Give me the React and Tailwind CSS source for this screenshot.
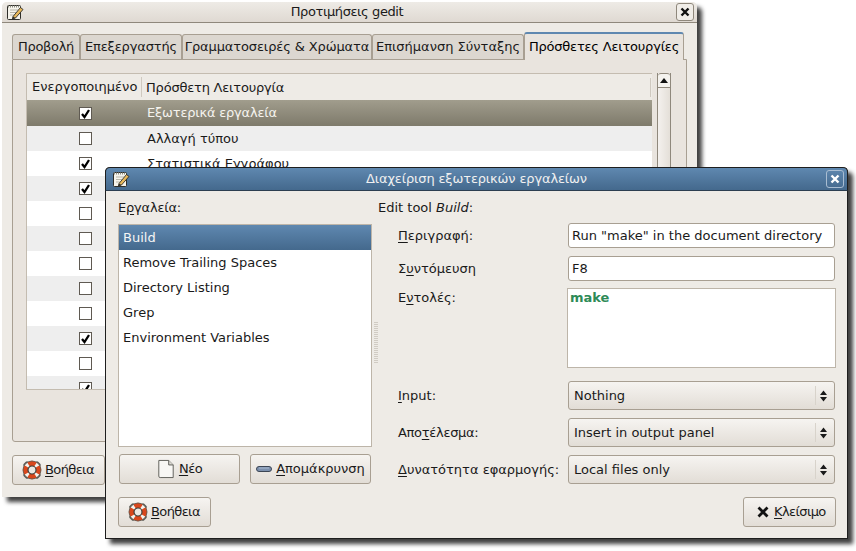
const FONT = "font-['DejaVu_Sans',sans-serif]";

const NoteIcon = ({ className }) => (
  <svg className={className} viewBox="0 0 18 18" width="18" height="18">
    <rect x="1.500" y="2.500" width="13" height="14" rx="1" fill="#f6f4ec" stroke="#2e2e2a" />
    <path d="M2 3.500h12" stroke="#8a8a80" strokeWidth="2" strokeDasharray="1 1" />
    <path d="M4 7h8M4 9.500h6M4 12h4" stroke="#b8b5a8" />
    <path d="M7 13.500 L14.500 4.500 L17 6.500 L9.500 15 L6.500 16 Z" fill="#e8b85a" stroke="#2e2e2a" strokeWidth="0.9" />
    <path d="M6.500 16 L7 13.500 L9.500 15 Z" fill="#2e2e2a" />
  </svg>
);

const HelpIcon = () => (
  <svg viewBox="0 0 20 20" width="20" height="20" className="shrink-0">
    <path d="M3 5 5 3M15 3l2 2M17 15l-2 2M5 17l-2-2" stroke="#5a5a54" strokeWidth="3.500" strokeLinecap="round" />
    <circle cx="10" cy="10" r="6.500" fill="none" stroke="#f5f2ec" strokeWidth="5" />
    <path d="M6.500 4.500a6.500 6.500 0 0 1 7 0M6.500 15.500a6.500 6.500 0 0 0 7 0M4.500 6.500a6.500 6.500 0 0 0 0 7M15.500 6.500a6.500 6.500 0 0 1 0 7" fill="none" stroke="#d8471c" strokeWidth="5" />
    <circle cx="10" cy="10" r="9" fill="none" stroke="#5a5a54" strokeWidth="0.800" />
    <circle cx="10" cy="10" r="4" fill="#ece8e2" stroke="#3c3c38" strokeWidth="1.200" />
  </svg>
);

const NewIcon = () => (
  <svg viewBox="0 0 20 22" width="18" height="20" className="shrink-0">
    <path d="M2 1.500h11l5 5v14H3.500a1.500 1.500 0 0 1-1.500-1.500Z" fill="#f8f7f4" stroke="#55554f" />
    <path d="M13 1.500v5h5" fill="#dcdad4" stroke="#55554f" />
  </svg>
);

const MinusIcon = () => (
  <svg viewBox="0 0 16 6" width="16" height="6" className="shrink-0">
    <rect x="0.500" y="0.500" width="15" height="5" rx="2.500" fill="#7c90ad" stroke="#3d4654" />
    <path d="M3 2h10" stroke="#a9b9cf" />
  </svg>
);

const Key = ({ children }) => <u className="underline-offset-2">{children}</u>;

function Button({ className, children }) {
  return (
    <div className={`flex items-center gap-1 rounded-[3px] border border-[#a89f92] bg-gradient-to-b from-[#f6f4f1] to-[#e2ddd6] text-[#1a1a1a] ${className}`}>
      {children}
    </div>
  );
}

function HelpButton({ className }) {
  return (
    <Button className={`h-[30px] w-[93px] !gap-[3px] pl-[9px] ${className}`}>
      <HelpIcon />
      <span className="tracking-[-0.6px]"><Key>Β</Key>οήθεια</span>
    </Button>
  );
}

function Combo({ children }) {
  return (
    <div className="flex h-[29px] w-[267px] items-center rounded-[3px] border border-[#a89f92] bg-gradient-to-b from-[#f6f4f1] to-[#e2ddd6]">
      <span className="flex-1 pl-[5px]">{children}</span>
      <span className="h-[19px] w-px bg-[#d8d3cb]" />
      <svg viewBox="0 0 9 14" width="9" height="14" className="ml-[3px] mr-[6px]">
        <path d="M4.500 1.500 8 6H1ZM4.500 12.500 1 8h7Z" fill="#1a1a1a" />
      </svg>
    </div>
  );
}

function Check({ on }) {
  return (
    <span className="flex h-[13px] w-[13px] items-center justify-center border border-[#5f5a52] bg-white">
      {on && (
        <svg viewBox="0 0 11 11" width="11" height="11">
          <path d="M2 6 4.500 9 9 2" fill="none" stroke="#000" strokeWidth="2.300" />
        </svg>
      )}
    </span>
  );
}

const tabs = [
  ["Προβολή", "w-[68px] tracking-[-0.3px]"],
  ["Επεξεργαστής", "w-[102px] tracking-[-0.15px]"],
  ["Γραμματοσειρές & Χρώματα", "w-[190px] tracking-[-0.12px]"],
  ["Επισήμανση Σύνταξης", "w-[152px]"],
];

const plugins = [
  ["Εξωτερικά εργαλεία", true],
  ["Αλλαγή τύπου", false],
  ["Στατιστικά Εγγράφου", true],
  ["", true],
  ["", false],
  ["", false],
  ["", false],
  ["", false],
  ["", false],
  ["", true],
  ["", false],
  ["", true],
];

const tools = ["Build", "Remove Trailing Spaces", "Directory Listing", "Grep", "Environment Variables"];

function PrefsWindow() {
  return (
    <div className="absolute left-[2px] top-[2px] flex h-[495px] w-[695px] flex-col rounded-t-[5px] bg-[#eeebe6] shadow-[5px_5px_4px_rgba(0,0,0,0.75)]">
      <div className="relative flex h-[21px] shrink-0 items-center justify-center rounded-t-[5px] border-b border-[#8f887c] bg-gradient-to-b from-[#eeebe6] to-[#dfd9d2] pr-[5px] text-[#1a1a1a]">
        <NoteIcon className="absolute left-[4px] top-[1px]" />
        <span className="tracking-[-0.4px]">Προτιμήσεις gedit</span>
        <span className="absolute right-[3px] top-px flex h-[18px] w-[18px] items-center justify-center rounded-[3px] border border-[#8f887c] bg-[#f0ede8]">
          <svg viewBox="0 0 10 10" width="10" height="10"><path d="M1.500 1.500l7 7M8.500 1.500l-7 7" stroke="#111" strokeWidth="2.400" /></svg>
        </span>
      </div>

      <div className="flex flex-1 flex-col px-[10px] pt-[9px]">
        <div className="flex h-[27px] shrink-0 items-end">
          {tabs.map(([name, w]) => (
            <div key={name} className={`flex h-[25px] items-center justify-center rounded-t-[3px] border border-b-0 border-[#a89f92] bg-[#dcd7d0] text-[#1a1a1a] ${w}`}>
              {name}
            </div>
          ))}
          <div className="z-10 -mb-px flex h-[28px] w-[160px] items-center justify-center rounded-t-[3px] border-x border-t-2 border-[#a89f92] border-t-[#5f88b0] bg-[#e9e4de] tracking-[-0.2px]">
            Πρόσθετες Λειτουργίες
          </div>
        </div>

        <div className="flex h-[383px] shrink-0 gap-[5px] rounded-b-[3px] border border-[#a89f92] bg-[#e9e4de] pl-[13px] pt-[13px]">
          <div className="h-[317px] w-[626px] shrink-0 overflow-hidden border-b border-l border-t border-[#c4bcb0] bg-white">
            <div className="flex h-[26px] items-center bg-[#eeebe6] text-[#1a1a1a]">
              <span className="w-[115px] border-r border-[#cfc9c0] pl-[5px]">Ενεργοποιημένο</span>
              <span className="flex-1 pl-[4px] leading-[19px] tracking-[-0.2px]"><span className="block border-r border-[#cfc9c0] mr-px">Πρόσθετη Λειτουργία</span></span>
            </div>
            {plugins.map(([name, on], i) => (
              <div
                key={i}
                className={`flex items-center ${i === 0 ? "h-[26px] bg-gradient-to-b from-[#a19d8d] to-[#7e7a6b] tracking-[-0.2px] text-[#f5f3ee]" : i % 2 ? "h-[25px] bg-[#eeeeee] text-[#1a1a1a]" : "h-[25px] bg-white text-[#1a1a1a]"}`}
              >
                <span className="flex w-[116px] justify-center"><Check on={on} /></span>
                <span className="pl-[4px]">{name}</span>
              </div>
            ))}
          </div>
          <div className="flex h-[317px] w-[14px] flex-col border-x border-[#8f887c] bg-gradient-to-r from-[#f4f1ee] to-[#e4dfd8]">
            <div className="flex h-[15px] items-center justify-center rounded-t-[3px] border-y border-[#8f887c] bg-[#f4f2ee]">
              <svg viewBox="0 0 8 5" width="8" height="5"><path d="M4 0 8 5H0Z" fill="#111" /></svg>
            </div>
          </div>
        </div>

        <div className="pt-[13px]">
          <HelpButton />
        </div>
      </div>
    </div>
  );
}

function FormRow({ label, children, className }) {
  return (
    <div className={`flex ${className}`}>
      <span className="w-[170px] shrink-0 text-[#1a1a1a]">{label}</span>
      {children}
    </div>
  );
}

function ToolsWindow() {
  return (
    <div className="absolute left-[105px] top-[167px] flex h-[372px] w-[743px] flex-col rounded-t-[5px] border border-t-0 border-[#1e1e1e] bg-[#eeebe6] shadow-[5px_5px_4px_rgba(0,0,0,0.75)]">
      <div className="relative -mx-px flex h-[24px] shrink-0 items-center justify-center rounded-t-[5px] border border-[#1e1e1e] border-b-[#2c3e50] bg-gradient-to-b from-[#5f88b0] to-[#44698d] text-[#f0f0f0]">
        <NoteIcon className="absolute left-[6px] top-[2px]" />
        <span className="tracking-[-0.15px]">Διαχείριση εξωτερικών εργαλείων</span>
        <span className="absolute right-[3px] top-[2px] flex h-[18px] w-[18px] items-center justify-center rounded-[3px] border border-[#a9bdd2]">
          <svg viewBox="0 0 10 10" width="10" height="10"><path d="M1.500 1.500l7 7M8.500 1.500l-7 7" stroke="#fff" strokeWidth="2.400" /></svg>
        </span>
      </div>

      <div className="flex flex-1 pl-[12px] pt-[8px] text-[#1a1a1a]">
        <div className="flex w-[254px] shrink-0 flex-col">
          <div className="h-[25px] leading-[18px] tracking-[-0.2px]">Ε<Key>ρ</Key>γαλεία:</div>
          <div className="h-[223px] border border-[#bdb5a9] bg-white">
            {tools.map((t, i) => (
              <div key={t} className={`flex h-[25px] items-center pl-[4px] ${i === 0 ? "bg-gradient-to-b from-[#5f88b0] to-[#44698d] text-[#f5f5f5]" : ""}`}>{t}</div>
            ))}
          </div>
          <div className="mt-[7px] flex gap-[10px] pl-px">
            <Button className="h-[30px] w-[121px] justify-center">
              <NewIcon />
              <span className="tracking-[-0.5px]"><Key>Ν</Key>έο</span>
            </Button>
            <Button className="h-[30px] w-[121px] justify-center">
              <MinusIcon />
              <span><Key>Α</Key>πομάκρυνση</span>
            </Button>
          </div>
          <HelpButton className="mt-[13px]" />
        </div>

        <div className="flex w-[6px] shrink-0 items-center pb-[51px] pl-[2px]">
          <div className="h-[42px] w-[4px] bg-[repeating-linear-gradient(to_bottom,#d0cbc3_0,#d0cbc3_1px,transparent_1px,transparent_2px)]" />
        </div>

        <div className="-mt-px flex flex-1 flex-col">
          <div className="h-[25px] leading-[20px]">Edit tool <i>Build</i>:</div>
          <div className="flex flex-col pl-[20px]">
            <FormRow className="h-[33px]" label={<span className="leading-[25px]"><Key>Π</Key>εριγραφή:</span>}>
              <div className="flex h-[25px] w-[267px] items-center rounded-[3px] border border-[#a89f92] bg-white pl-[3px]">Run "make" in the document directory</div>
            </FormRow>
            <FormRow className="h-[32px]" label={<span className="leading-[25px]">Σ<Key>υ</Key>ντόμευση</span>}>
              <div className="flex h-[25px] w-[267px] items-center rounded-[3px] border border-[#a89f92] bg-white pl-[3px]">F8</div>
            </FormRow>
            <FormRow className="h-[93px]" label={<span className="leading-[17px]">Ε<Key>ν</Key>τολές:</span>}>
              <div className="-ml-px h-[80px] w-[269px] border border-[#bdb5a9] bg-white pl-[2px] font-bold leading-[17px] text-[#2e8b57]">make</div>
            </FormRow>
            <FormRow className="h-[37px] items-start" label={<span className="leading-[29px]"><Key>I</Key>nput:</span>}>
              <Combo>Nothing</Combo>
            </FormRow>
            <FormRow className="h-[37px] items-start" label={<span className="leading-[29px] tracking-[-0.3px]">Απο<Key>τ</Key>έλεσμα:</span>}>
              <Combo>Insert in output panel</Combo>
            </FormRow>
            <FormRow className="h-[42px] items-start" label={<span className="leading-[29px]"><Key>Δ</Key>υνατότητα εφαρμογής:</span>}>
              <Combo>Local files only</Combo>
            </FormRow>
            <div className="flex justify-end pr-[11px]">
              <Button className="h-[30px] w-[93px] !gap-[5px] pl-[13px]">
                <svg viewBox="0 0 12 12" width="12" height="12"><path d="M1.500 1.500l9 9M10.500 1.500l-9 9" stroke="#111" strokeWidth="2.800" /></svg>
                <span className="tracking-[-0.6px]"><Key>Κ</Key>λείσιμο</span>
              </Button>
            </div>
          </div>
        </div>
      </div>
    </div>
  );
}

export default function App() {
  return (
    <div className={`relative h-[551px] w-[856px] overflow-hidden bg-white text-[13px] ${FONT}`}>
      <PrefsWindow />
      <ToolsWindow />
    </div>
  );
}
